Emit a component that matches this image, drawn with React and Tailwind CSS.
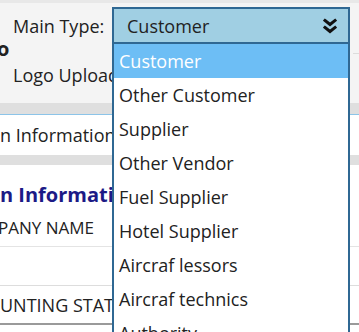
import React from "react";

const items = [
  "Customer",
  "Other Customer",
  "Supplier",
  "Other Vendor",
  "Fuel Supplier",
  "Hotel Supplier",
  "Aircraf lessors",
  "Aircraf technics",
  "Authority",
];

function DoubleChevron() {
  return (
    <svg width="14" height="16" viewBox="0 0 14 16" fill="none">
      <path d="M2 2.5 L7 6.5 L12 2.5" stroke="#111" strokeWidth="3" strokeLinecap="square" strokeLinejoin="miter" />
      <path d="M2 9.5 L7 13.5 L12 9.5" stroke="#111" strokeWidth="3" strokeLinecap="square" strokeLinejoin="miter" />
    </svg>
  );
}

export default function App() {
  return (
    <div
      className="relative w-[359px] h-[332px] overflow-hidden bg-white text-[#222]"
      style={{ fontFamily: '"Open Sans", "Noto Sans", sans-serif' }}
    >
      <div className="h-[3px] bg-[#e8e8e8]" />
      <div className="h-[100px] bg-[#f4f4f4] pt-[4px]">
        <div className="flex items-center h-[37px]">
          <div className="w-[112px] pl-[13px] text-[18px] leading-[24px] whitespace-nowrap">Main Type:</div>
          <div className="w-[238px] h-[37px] bg-[#a0cfe3] border-2 border-[#2f6893] flex items-center justify-between pl-[13px] pr-[11px]">
            <span className="text-[18px] leading-[24px]">Customer</span>
            <DoubleChevron />
          </div>
          <div className="flex-1 self-stretch relative">
            <div className="absolute left-[3px] right-0 top-[46px] h-px bg-[#dcdcdc]" />
          </div>
        </div>
        <div className="mt-[-5px] ml-[-3px] text-[20px] leading-[20px] font-bold">o</div>
        <div className="mt-[4px] w-[112px] overflow-hidden pl-[13px] text-[18px] leading-[24px] whitespace-nowrap">Logo Upload</div>
      </div>
      <div className="h-[11px] bg-[#dfdfdf]" />
      <div className="h-[41px] border-t border-[#8cc4e8] bg-white flex items-center">
        <div className="w-[112px] overflow-hidden text-[18px] leading-[24px] whitespace-nowrap">n Information</div>
      </div>
      <div className="h-[10px] bg-[#dfdfdf]" />
      <div className="pt-[17px] h-[45px]">
        <div className="w-[112px] overflow-hidden text-[20px] leading-[26px] font-bold text-[#1c1a86] whitespace-nowrap">
          n Information
        </div>
      </div>
      <div className="h-[37px] flex items-center border-b border-[#e4e4e4]">
        <div className="w-[112px] overflow-hidden text-[17px] leading-[24px] whitespace-nowrap">
          <span className="ml-[-2px]">PANY NAME</span>
        </div>
      </div>
      <div className="h-[39px] border-b border-[#dddddd]" />
      <div className="h-[39px] flex items-center border-b-2 border-[#9a9a9a]">
        <div className="w-[112px] overflow-hidden text-[18px] leading-[24px] whitespace-nowrap">UNTING STATUS</div>
      </div>

      <div className="absolute left-[112px] top-[44px] w-[238px] bg-white border-x-2 border-[#2f6893]">
        {items.map((it, i) => (
          <div
            key={it}
            className={
              "h-[34px] flex items-center pl-[5px] text-[18px] leading-[24px] whitespace-nowrap " +
              (i === 0 ? "bg-[#6dbef5] text-white" : "text-[#222]")
            }
          >
            {it}
          </div>
        ))}
      </div>
    </div>
  );
}
